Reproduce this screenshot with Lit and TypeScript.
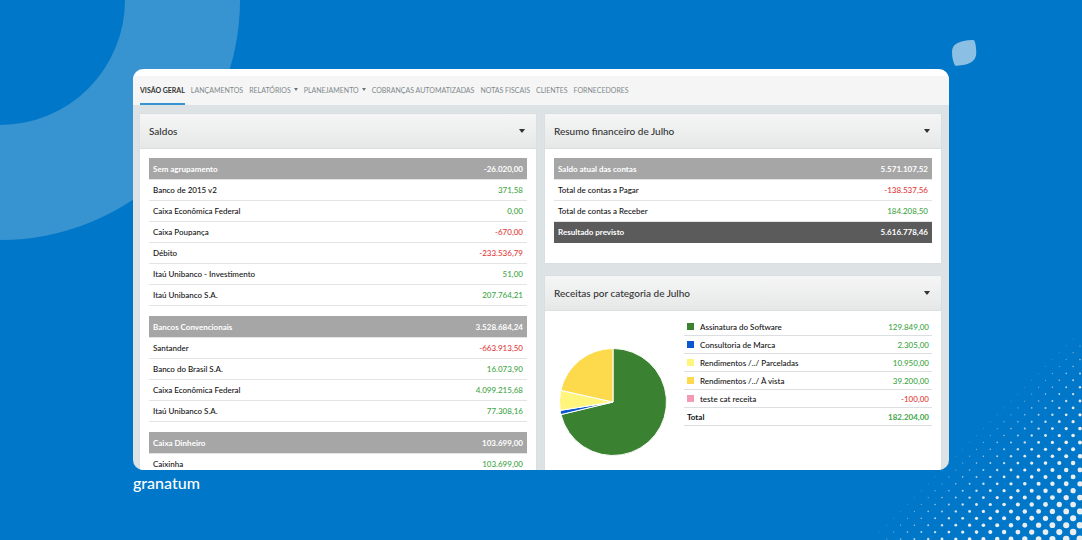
import { LitElement, html, svg, css, nothing } from "lit";
import { customElement, property } from "lit/decorators.js";

interface Row {
  label: string;
  value: string;
  color?: string;
}

interface Group {
  head: Row;
  rows: Row[];
}

const TABS = [
  { label: "Visão geral", current: true },
  { label: "Lançamentos" },
  { label: "Relatórios", menu: true },
  { label: "Planejamento", menu: true },
  { label: "Cobranças automatizadas" },
  { label: "Notas fiscais" },
  { label: "Clientes" },
  { label: "Fornecedores" },
];

const BALANCES: Group[] = [
  {
    head: { label: "Sem agrupamento", value: "-26.020,00" },
    rows: [
      { label: "Banco de 2015 v2", value: "371,58" },
      { label: "Caixa Econômica Federal", value: "0,00" },
      { label: "Caixa Poupança", value: "-670,00" },
      { label: "Débito", value: "-233.536,79" },
      { label: "Itaú Unibanco - Investimento", value: "51,00" },
      { label: "Itaú Unibanco S.A.", value: "207.764,21" },
    ],
  },
  {
    head: { label: "Bancos Convencionais", value: "3.528.684,24" },
    rows: [
      { label: "Santander", value: "-663.913,50" },
      { label: "Banco do Brasil S.A.", value: "16.073,90" },
      { label: "Caixa Econômica Federal", value: "4.099.215,68" },
      { label: "Itaú Unibanco S.A.", value: "77.308,16" },
    ],
  },
  {
    head: { label: "Caixa Dinheiro", value: "103.699,00" },
    rows: [{ label: "Caixinha", value: "103.699,00" }],
  },
];

const INCOME: Row[] = [
  { label: "Assinatura do Software", value: "129.849,00", color: "#3a8132" },
  { label: "Consultoria de Marca", value: "2.305,00", color: "#0b57d0" },
  { label: "Rendimentos /../ Parceladas", value: "10.950,00", color: "#fff47c" },
  { label: "Rendimentos /../ À vista", value: "39.200,00", color: "#fcda4b" },
  { label: "teste cat receita", value: "-100,00", color: "#f49ab4" },
];

const amount = (text: string) => Number(text.replace(/\./g, "").replace(",", "."));
const tone = (text: string) => (text.startsWith("-") ? "negative" : "positive");

@customElement("page-backdrop")
export class PageBackdrop extends LitElement {
  static styles = css`
    :host {
      display: block;
      overflow: hidden;
      background: #0077c8;
    }
    .ring,
    .leaf,
    .dots {
      position: absolute;
      display: block;
    }
    .ring {
      left: 0;
      top: 0;
    }
    .leaf {
      right: 105px;
      top: 39px;
    }
    .dots {
      right: 0;
      bottom: 0;
    }
  `;

  // Halftone pattern: a staggered lattice whose dots shrink away from the corner.
  private dots() {
    const out = [];
    for (let row = 0; row < 30; row++) {
      for (let col = 0; col < 30; col++) {
        if ((row + col) % 2) continue;
        const dx = 2 + col * 6.9;
        const dy = 1 + row * 6.9;
        const r = 3.5 * (1 - (dx + dy) / 236);
        if (r < 0.3) continue;
        out.push(svg`<circle cx=${220 - dx} cy=${220 - dy} r=${Math.max(r, 0.45)}
          opacity=${Math.min(1, 0.25 + r * 0.5)} />`);
      }
    }
    return out;
  }

  render() {
    return html`
      <svg class="ring" width="240" height="240" aria-hidden="true">
        <path d="M125 0H240A240 240 0 0 1 0 240V125A125 125 0 0 0 125 0Z" fill="#3894d1" />
      </svg>
      <svg class="leaf" width="26" height="28" aria-hidden="true">
        <path
          d="M4 26.500Q5 27 8 26.500C20 26 25.500 21 25.300 13Q25 5 23.300 1.500Q22.800 .8 21.500 1C8 1.500 1 5 1 13Q1 21 4 26.500Z"
          fill="#8bbfe3"
        />
      </svg>
      <svg class="dots" width="220" height="220" fill="#ebeef1" aria-hidden="true">${this.dots()}</svg>
    `;
  }
}

@customElement("dash-panel")
export class DashPanel extends LitElement {
  @property() heading = "";

  static styles = css`
    :host {
      display: block;
      background: #fff;
      box-shadow: 0 0 1px #c5cacd;
    }
    .head {
      display: flex;
      align-items: center;
      justify-content: space-between;
      box-sizing: border-box;
      height: 35px;
      padding: 0 9px;
      border-bottom: 1px solid #dcdfe0;
      background: linear-gradient(#f5f5f5, #e6e8e8);
    }
    .title {
      margin: 0;
      font-size: 10px;
      line-height: 16px;
      font-weight: 500;
      color: #333;
    }
    .toggle {
      display: flex;
      padding: 4px 2px;
      border: 0;
      background: none;
    }
    .body {
      padding: 9px 9px 20px;
    }
  `;

  render() {
    return html`
      <header class="head">
        <h2 class="title">${this.heading}</h2>
        <button class="toggle" type="button" aria-label="Opções de ${this.heading}">
          <svg width="6" height="4" aria-hidden="true"><path d="M0 0H6L3.500 3.500H2.500Z" fill="#333" /></svg>
        </button>
      </header>
      <div class="body"><slot></slot></div>
    `;
  }
}

@customElement("pie-chart")
export class PieChart extends LitElement {
  @property({ attribute: false }) rows: Row[] = [];

  static styles = css`
    :host {
      display: block;
    }
    .pie {
      display: block;
    }
  `;

  render() {
    const slices = this.rows.filter((r) => amount(r.value) > 0);
    const total = slices.reduce((sum, r) => sum + amount(r.value), 0);
    const at = (t: number) => {
      const a = t * 2 * Math.PI;
      return `${54 + 53.5 * Math.sin(a)} ${54 - 53.5 * Math.cos(a)}`;
    };
    let start = 0;
    return html`<svg class="pie" width="108" height="108" role="img" aria-label="Receitas por categoria">
      ${slices.map((r) => {
        const end = start + amount(r.value) / total;
        const d = `M54 54L${at(start)}A53.5 53.5 0 ${end - start > 0.5 ? 1 : 0} 1 ${at(end)}Z`;
        start = end;
        return svg`<path d=${d} fill=${r.color} stroke="#fff" stroke-width="1" />`;
      })}
    </svg>`;
  }
}

@customElement("app-root")
export class AppRoot extends LitElement {
  static styles = css`
    :host {
      display: flex;
      flex-direction: column;
      position: relative;
      box-sizing: border-box;
      height: 100vh;
      padding: 69px 133px 0;
      font-family: Lato, "Open Sans", sans-serif;
      font-size: 8px;
      line-height: 12px;
      color: #111;
    }
    .backdrop {
      position: absolute;
      inset: 0;
    }
    .window {
      position: relative;
      flex: 1;
      min-height: 0;
      overflow: hidden;
      border-radius: 10px;
      border-top: 7px solid #fff;
      background: #dde2e5;
    }
    .nav {
      display: flex;
      gap: 6px;
      height: 29px;
      padding: 0 7px;
      background: #f5f5f5;
    }
    .tab {
      display: flex;
      align-items: center;
      gap: 3px;
      box-sizing: border-box;
      padding: 0;
      border: 0;
      border-bottom: 2px solid transparent;
      background: none;
      font: inherit;
      font-size: 7px;
      text-transform: uppercase;
      text-decoration: none;
      white-space: nowrap;
      color: #7f898d;
    }
    .current {
      border-color: #3894d1;
      font-weight: 700;
      color: #333;
    }
    .columns {
      display: grid;
      grid-template-columns: 1fr 1fr;
      gap: 9px;
      padding: 9px 8px 0 7px;
      align-items: start;
    }
    .stack {
      display: grid;
      gap: 13px;
    }
    .table {
      width: 100%;
      border-collapse: separate;
      border-spacing: 0;
    }
    .table + .table {
      margin-top: 10px;
    }
    .table th,
    .table td {
      box-sizing: border-box;
      height: 21px;
      padding: 0 4px;
      border-bottom: 1px solid #e2e4e5;
      text-align: left;
      font-weight: 500;
    }
    .table td {
      text-align: right;
    }
    .table .group th,
    .table .group td {
      height: 22px;
      background: #a6a6a6;
      background-clip: padding-box;
      font-weight: 700;
      color: #fff;
    }
    .table .result th,
    .table .result td {
      border-color: #5b5b5b;
      background: #5b5b5b;
      font-weight: 700;
      color: #fff;
    }
    .positive {
      color: #3fa648;
    }
    .negative {
      color: #e23b3b;
    }
    .income {
      display: grid;
      grid-template-columns: 108px 1fr;
      gap: 17px;
      align-items: start;
      padding-left: 5px;
    }
    .chart {
      padding-top: 28px;
    }
    .table.legend th,
    .table.legend td {
      height: 18px;
      padding: 0 3px;
      border-color: #dcdfe1;
    }
    .legend {
      margin-top: -2px;
    }
    .key {
      display: flex;
      align-items: center;
      gap: 6px;
    }
    .swatch {
      width: 7px;
      height: 7px;
    }
    .table .total th,
    .table .total td {
      font-weight: 700;
    }
    .footer {
      position: relative;
      height: 70px;
    }
    .brand {
      display: inline-flex;
      padding-top: 3px;
      font-size: 16px;
      line-height: 20px;
      font-weight: 500;
      text-decoration: none;
      color: #fff;
    }
  `;

  private row(r: Row, kind = "") {
    return html`<tr class=${kind}>
      <th scope="row">
        ${r.color
          ? html`<span class="key"><span class="swatch" style="background:${r.color}"></span>${r.label}</span>`
          : r.label}
      </th>
      <td class=${tone(r.value)}>${r.value}</td>
    </tr>`;
  }

  render() {
    const caret = html`<svg width="4" height="3" aria-hidden="true"><path d="M0 0H4L2 3Z" fill="#6b7478" /></svg>`;
    return html`
      <page-backdrop class="backdrop"></page-backdrop>
      <main class="window">
        <nav class="nav">
          ${TABS.map((t) =>
            t.menu
              ? html`<button class="tab" type="button" aria-haspopup="true">${t.label}${caret}</button>`
              : html`<a class="tab ${t.current ? "current" : ""}" href="#" aria-current=${t.current ? "page" : nothing}
                  >${t.label}</a
                >`
          )}
        </nav>
        <div class="columns">
          <dash-panel heading="Saldos">
            ${BALANCES.map(
              (g) => html`<table class="table">
                <tbody>
                  ${this.row(g.head, "group")} ${g.rows.map((r) => this.row(r))}
                </tbody>
              </table>`
            )}
          </dash-panel>
          <div class="stack">
            <dash-panel heading="Resumo financeiro de Julho">
              <table class="table">
                <tbody>
                  ${this.row({ label: "Saldo atual das contas", value: "5.571.107,52" }, "group")}
                  ${this.row({ label: "Total de contas a Pagar", value: "-138.537,56" })}
                  ${this.row({ label: "Total de contas a Receber", value: "184.208,50" })}
                  ${this.row({ label: "Resultado previsto", value: "5.616.778,46" }, "result")}
                </tbody>
              </table>
            </dash-panel>
            <dash-panel heading="Receitas por categoria de Julho">
              <div class="income">
                <pie-chart class="chart" .rows=${INCOME}></pie-chart>
                <table class="table legend">
                  <tbody>
                    ${INCOME.map((r) => this.row(r))}
                    ${this.row({ label: "Total", value: "182.204,00" }, "total")}
                  </tbody>
                </table>
              </div>
            </dash-panel>
          </div>
        </div>
      </main>
      <footer class="footer"><a class="brand" href="#">granatum</a></footer>
    `;
  }
}
